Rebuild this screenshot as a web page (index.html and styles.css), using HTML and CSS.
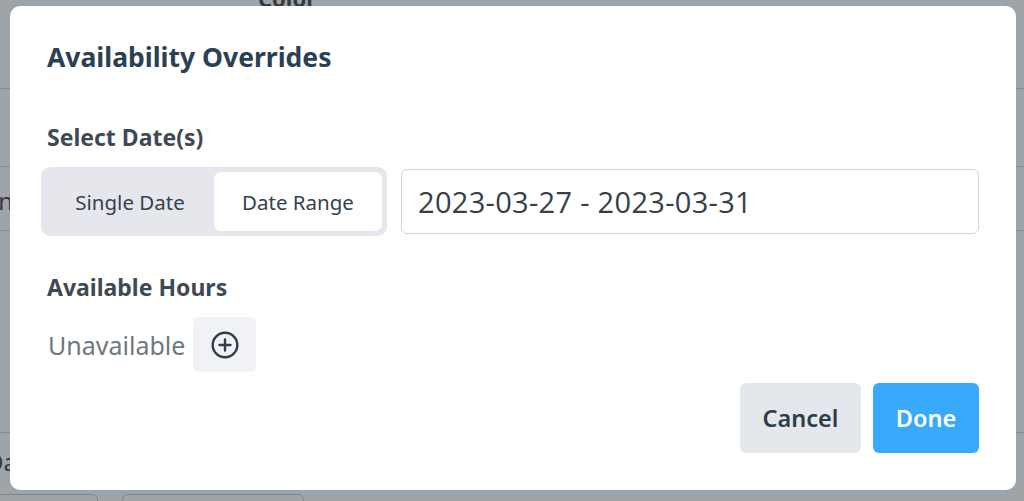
FILE: index.html
```html
<!DOCTYPE html>
<html>
<head>
<meta charset="utf-8">
<link rel="stylesheet" href="styles.css">
</head>
<body>
<div class="page">
  <div class="page-head">Color</div>
  <div class="row r1"></div>
  <div class="row r2"></div>
  <div class="row r3"><span class="cut">in</span></div>
  <div class="row r4"></div>
  <div class="r5"><span class="cut">Da</span></div>
  <div class="foot"><span class="fbox b1"></span><span class="fbox b2"></span></div>
</div>
<div class="overlay"></div>
<div class="modal">
  <h2 class="title">Availability Overrides</h2>
  <h3 class="label sel">Select Date(s)</h3>
  <div class="date-row">
    <div class="toggle">
      <span class="opt">Single Date</span>
      <span class="opt active">Date Range</span>
    </div>
    <div class="input">2023-03-27 - 2023-03-31</div>
  </div>
  <h3 class="label hours">Available Hours</h3>
  <div class="hours-row">
    <span class="unavail">Unavailable</span>
    <span class="add">
      <svg width="30" height="30" viewBox="0 0 30 30" fill="none" stroke="#2d3d4b" stroke-width="2.4" stroke-linecap="round">
        <circle cx="15" cy="15" r="12.3"/>
        <path d="M15 9.5v11M9.5 15h11"/>
      </svg>
    </span>
  </div>
  <div class="actions">
    <span class="btn cancel">Cancel</span>
    <span class="btn done">Done</span>
  </div>
</div>
</body>
</html>
```
FILE: styles.css
```css
html, body {
  margin: 0;
  padding: 0;
}
body {
  width: 1024px;
  height: 501px;
  overflow: hidden;
  background: #fff;
  font-family: "Noto Sans", "Lato", sans-serif;
  position: relative;
}
.page {
  height: 501px;
  overflow: hidden;
  position: relative;
}
.page-head {
  height: 0;
  padding-left: 258px;
  font-weight: 700;
  font-size: 22px;
  color: #222;
  line-height: 0;
  transform: translateY(-2px);
}
.row {
  border-bottom: 1px solid #c9cdd2;
  position: relative;
}
.r1 { height: 88px; }
.r2 { height: 77px; }
.r3 { height: 63px; }
.r4 { height: 201px; }
.r5 { height: 58px; position: relative; }
.cut {
  position: absolute;
  left: -8px;
  font-size: 24px;
  color: #222;
}
.r3 .cut { top: 17px; }
.r5 .cut { top: 12px; left: -14px; }
.foot {
  display: flex;
  gap: 24px;
  padding-top: 3px;
}
.fbox {
  display: block;
  height: 30px;
  border: 1px solid #b9bec4;
  border-radius: 6px;
  background: #fff;
}
.b1 { width: 100px; margin-left: -4px; }
.b2 { width: 180px; }
.overlay {
  position: absolute;
  inset: 0;
  background: rgba(70, 80, 90, 0.52);
}
.modal {
  position: absolute;
  left: 10px;
  top: 6px;
  width: 1006px;
  height: 484px;
  box-sizing: border-box;
  background: #fff;
  border-radius: 10px;
  padding: 35px 37px 0 37px;
  display: flex;
  flex-direction: column;
}
.title {
  margin: 0;
  font-size: 26.5px;
  line-height: 32px;
  font-weight: 700;
  color: #2b4152;
}
.label {
  margin: 0;
  font-size: 23px;
  line-height: 28px;
  font-weight: 700;
  color: #3f4953;
}
.sel { margin-top: 50px; }
.date-row {
  display: flex;
  align-items: center;
  gap: 14px;
  margin-top: 16px;
  margin-left: -6px;
}
.toggle {
  display: flex;
  background: #e5e7ec;
  border-radius: 9px;
  padding: 5px;
  width: 346px;
  height: 69px;
  box-sizing: border-box;
}
.opt {
  flex: 1;
  display: flex;
  align-items: center;
  justify-content: center;
  font-size: 20.5px;
  color: #35424e;
  border-radius: 7px;
}
.opt.active {
  background: #fff;
  flex: 0 0 168px;
}
.input {
  flex: 1;
  height: 65px;
  box-sizing: border-box;
  border: 1.5px solid #cdd5e6;
  border-radius: 6px;
  display: flex;
  align-items: center;
  padding-left: 16px;
  font-family: "Open Sans", "Noto Sans", sans-serif;
  font-size: 29px;
  letter-spacing: 0.3px;
  color: #363e46;
}
.hours { margin-top: 37px; }
.hours-row {
  display: flex;
  align-items: center;
  gap: 8px;
  margin-top: 16px;
}
.unavail {
  font-size: 25px;
  color: #6e7881;
  margin-left: 1px;
}
.add {
  width: 63px;
  height: 55px;
  background: #f1f2f5;
  border-radius: 6px;
  display: flex;
  align-items: center;
  justify-content: center;
}
.actions {
  display: flex;
  justify-content: flex-end;
  gap: 12px;
  margin-top: 11px;
}
.btn {
  height: 70px;
  border-radius: 6px;
  display: flex;
  align-items: center;
  justify-content: center;
  font-size: 23.5px;
  font-weight: 600;
}
.cancel {
  width: 121px;
  background: #e4e7eb;
  color: #2d3d4b;
}
.done {
  width: 106px;
  background: #38a9fb;
  color: #fff;
}
```
